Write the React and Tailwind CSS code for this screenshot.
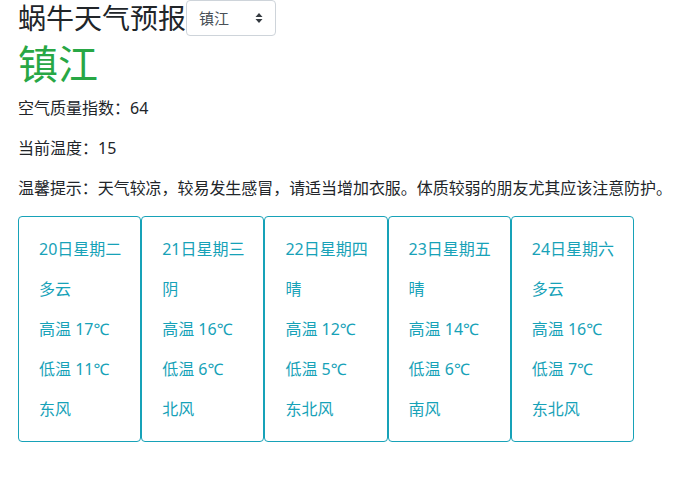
const days = [
  { date: "20日星期二", type: "多云", high: "17℃", low: "11℃", wind: "东风" },
  { date: "21日星期三", type: "阴", high: "16℃", low: "6℃", wind: "北风" },
  { date: "22日星期四", type: "晴", high: "12℃", low: "5℃", wind: "东北风" },
  { date: "23日星期五", type: "晴", high: "14℃", low: "6℃", wind: "南风" },
  { date: "24日星期六", type: "多云", high: "16℃", low: "7℃", wind: "东北风" },
];

function SortArrows() {
  return (
    <svg width="8" height="12" viewBox="0 0 8 12" className="fill-[#343a40]">
      <path d="M4 1 L7.5 5 H0.5 Z" />
      <path d="M4 11 L7.5 7 H0.5 Z" />
    </svg>
  );
}

export default function App() {
  return (
    <div className="min-h-screen bg-white px-[18px] text-[16px] leading-6 text-[#212529] font-['Noto_Sans','Noto_Sans_CJK_SC',sans-serif] whitespace-nowrap">
      <div className="flex items-center h-[36px] mb-[4px]">
        <h3 className="text-[28px] leading-[36px]">蜗牛天气预报</h3>
        <div className="flex items-center justify-between w-[90px] h-[36px] px-3 border border-[#ced4da] rounded bg-white text-[#495057] text-[15px]">
          <span>镇江</span>
          <SortArrows />
        </div>
      </div>
      <h1 className="text-[40px] leading-[1.2] text-[#28a745] mb-2">镇江</h1>
      <p className="mb-4">空气质量指数：64</p>
      <p className="mb-4">当前温度：15</p>
      <p className="mb-4 tracking-[-0.05px]">温馨提示：天气较凉，较易发生感冒，请适当增加衣服。体质较弱的朋友尤其应该注意防护。</p>
      <div className="flex">
        {days.map((d) => (
          <div
            key={d.date}
            className="w-[123.2px] shrink-0 border border-[#17a2b8] rounded p-5 text-[#17a2b8]"
          >
            <p className="mb-4">{d.date}</p>
            <p className="mb-4">{d.type}</p>
            <p className="mb-4">高温 {d.high}</p>
            <p className="mb-4">低温 {d.low}</p>
            <p>{d.wind}</p>
          </div>
        ))}
      </div>
    </div>
  );
}
